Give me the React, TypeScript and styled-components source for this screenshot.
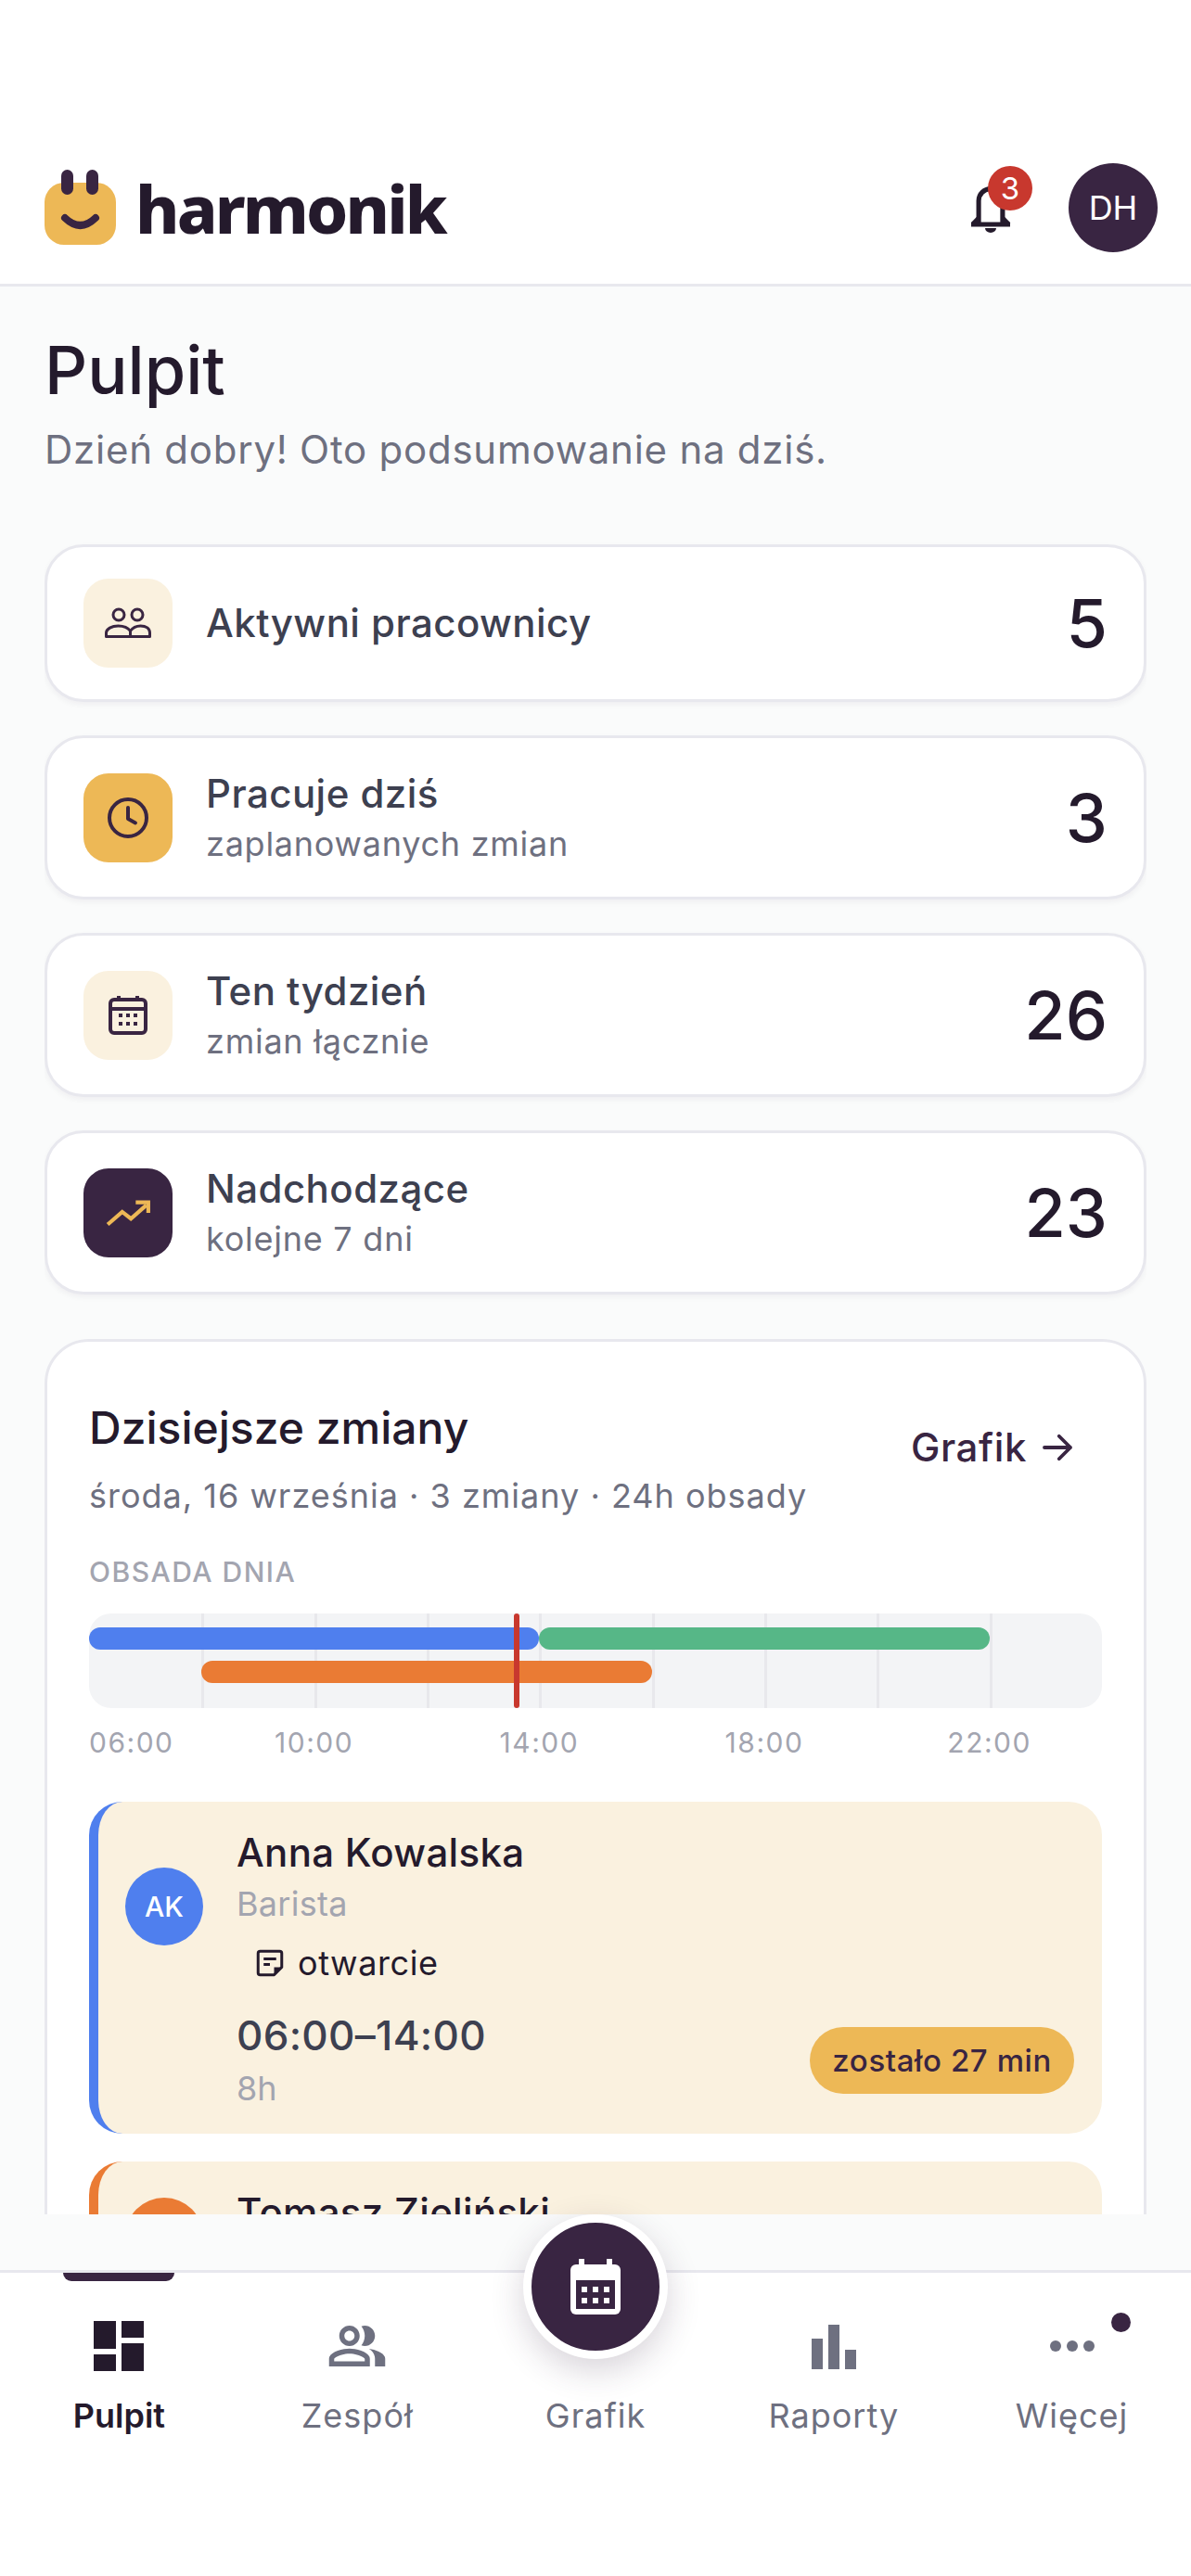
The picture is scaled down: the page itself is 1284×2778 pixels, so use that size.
import * as React from 'react';
import styled, { createGlobalStyle } from 'styled-components';

const dark = '#392542';
const ink = '#241a2c';
const amber = '#edb856';
const cream = '#faf1df';
const muted = '#6e7080';
const faint = '#a3a5b0';
const line = '#e8e8ee';

const GlobalStyle = createGlobalStyle`
	html, body {
		margin: 0;
		padding: 0;
		background: #fff;
		font-family: Inter, "Noto Sans", sans-serif;
	}
	* { box-sizing: border-box; }
`;

const Screen = styled.div`
	width: 1284px;
	height: 2778px;
	display: flex;
	flex-direction: column;
	background: #fff;
	padding-top: 141px;
	overflow: hidden;
	position: relative;
`;

const Header = styled.header`
	height: 168px;
	flex: none;
	display: flex;
	align-items: center;
	justify-content: space-between;
	padding: 0 36px 0 48px;
	border-bottom: 3px solid ${line};
`;

const Brand = styled.div`
	display: flex;
	align-items: center;
	gap: 20px;
`;

const BrandName = styled.span`
	font-family: "Noto Sans", Inter, sans-serif;
	font-weight: 800;
	font-size: 72px;
	letter-spacing: -2.8px;
	color: ${ink};
	line-height: 1;
`;

const HeaderActions = styled.div`
	display: flex;
	align-items: center;
	gap: 48px;
`;

const BellWrap = styled.div`
	position: relative;
	width: 72px;
	height: 72px;
	color: ${ink};
`;

const BellBadge = styled.span`
	position: absolute;
	top: -9px;
	right: -9px;
	width: 48px;
	height: 48px;
	border-radius: 50%;
	background: #c8382e;
	color: #fff;
	font-size: 33px;
	display: flex;
	align-items: center;
	justify-content: center;
`;

const UserAvatar = styled.div`
	width: 96px;
	height: 96px;
	border-radius: 50%;
	background: ${dark};
	color: #fff;
	font-size: 36px;
	font-weight: 400;
	display: flex;
	align-items: center;
	justify-content: center;
`;

const Content = styled.main`
	height: 2139px;
	flex: none;
	background: #fafbfb;
	padding: 48px 48px 60px;
`;

const Clip = styled.div`
	height: 2031px;
	overflow: hidden;
`;

const PageTitle = styled.h1`
	margin: 0;
	font-size: 72px;
	line-height: 84px;
	font-weight: 500;
	color: ${ink};
`;

const PageSubtitle = styled.p`
	margin: 17px 0 0;
	font-size: 42px;
	line-height: 54px;
	letter-spacing: 0.75px;
	color: ${muted};
`;

const StatList = styled.div`
	margin-top: 75px;
	display: flex;
	flex-direction: column;
	gap: 36px;
`;

const StatCard = styled.div<{ $tall: boolean }>`
	height: ${p => (p.$tall ? 177 : 170)}px;
	display: flex;
	align-items: center;
	gap: 36px;
	padding: 0 39px;
	background: #fff;
	border: 3px solid ${line};
	border-radius: 42px;
	box-shadow: 0 3px 6px rgba(30, 20, 50, 0.05);
`;

const StatIcon = styled.div<{ $bg: string; $fg: string }>`
	width: 96px;
	height: 96px;
	flex: none;
	border-radius: 27px;
	background: ${p => p.$bg};
	color: ${p => p.$fg};
	display: flex;
	align-items: center;
	justify-content: center;
`;

const StatText = styled.div`
	flex: 1;
	display: flex;
	flex-direction: column;
	gap: 3px;
`;

const StatLabel = styled.div`
	font-size: 42px;
	line-height: 54px;
	font-weight: 500;
	letter-spacing: 0.45px;
	color: #3d4050;
`;

const StatHint = styled.div`
	font-size: 36px;
	line-height: 48px;
	letter-spacing: 0.75px;
	color: ${muted};
`;

const StatValue = styled.div`
	font-size: 72px;
	line-height: 84px;
	font-weight: 500;
	color: ${ink};
`;

const ShiftsCard = styled.section`
	margin-top: 48px;
	background: #fff;
	border: 3px solid ${line};
	border-radius: 48px;
	padding: 63px 45px 60px;
`;

const ShiftsHead = styled.div`
	display: flex;
	align-items: flex-start;
	justify-content: space-between;
`;

const ShiftsTitle = styled.h2`
	margin: 0;
	font-size: 48px;
	line-height: 60px;
	font-weight: 500;
	color: ${ink};
`;

const ShiftsMeta = styled.div`
	margin-top: 19px;
	font-size: 36px;
	line-height: 48px;
	letter-spacing: 1px;
	color: ${muted};
`;

const GrafikLink = styled.div`
	display: flex;
	align-items: center;
	gap: 12px;
	margin: 24px 27px 0 0;
	font-size: 42px;
	line-height: 54px;
	font-weight: 500;
	letter-spacing: 0.6px;
	color: ${dark};
`;

const ChartLabel = styled.div`
	margin-top: 40px;
	font-size: 30px;
	line-height: 36px;
	font-weight: 500;
	letter-spacing: 1.5px;
	color: ${faint};
`;

const Track = styled.div`
	position: relative;
	margin-top: 27px;
	height: 102px;
	border-radius: 24px;
	background: #f3f4f6;
`;

const GridLine = styled.span`
	position: absolute;
	top: 0;
	bottom: 0;
	width: 3px;
	background: #e8e8ec;
`;

const Bar = styled.span<{ $color: string; $row: number }>`
	position: absolute;
	top: ${p => 15 + p.$row * 36}px;
	height: 24px;
	border-radius: 12px;
	background: ${p => p.$color};
`;

const NowLine = styled.span`
	position: absolute;
	top: 0;
	bottom: 0;
	width: 6px;
	border-radius: 3px;
	background: #c8382e;
`;

const Ticks = styled.div`
	position: relative;
	height: 42px;
	margin-top: 16px;
`;

const Tick = styled.span<{ $first: boolean }>`
	position: absolute;
	top: 0;
	font-size: 30px;
	line-height: 42px;
	letter-spacing: 1.5px;
	color: ${faint};
	transform: ${p => (p.$first ? 'none' : 'translateX(-50%)')};
`;

const ShiftList = styled.div`
	margin-top: 43px;
	display: flex;
	flex-direction: column;
	gap: 30px;
`;

const Shift = styled.article<{ $accent: string }>`
	background: ${cream};
	border-left: 10px solid ${p => p.$accent};
	border-radius: 36px;
	padding: 28px 30px 25px 29px;
`;

const ShiftTop = styled.div`
	display: flex;
	align-items: center;
	gap: 36px;
`;

const ShiftAvatar = styled.div<{ $color: string }>`
	width: 84px;
	height: 84px;
	flex: none;
	border-radius: 50%;
	background: ${p => p.$color};
	color: #fff;
	font-size: 30px;
	font-weight: 500;
	display: flex;
	align-items: center;
	justify-content: center;
`;

const ShiftName = styled.div`
	font-size: 42px;
	line-height: 54px;
	font-weight: 500;
	letter-spacing: 0.3px;
	color: ${ink};
`;

const ShiftRole = styled.div`
	margin-top: 4px;
	font-size: 36px;
	line-height: 48px;
	letter-spacing: 0.3px;
	color: ${faint};
`;

const ShiftNote = styled.div`
	display: flex;
	align-items: center;
	gap: 12px;
	margin-top: 16px;
	padding-left: 18px;
	font-size: 36px;
	line-height: 48px;
	letter-spacing: 0.6px;
	color: ${ink};
`;

const ShiftBottom = styled.div`
	display: flex;
	align-items: center;
	justify-content: space-between;
	margin: 27px 0 0 120px;
`;

const ShiftTime = styled.div`
	font-size: 44px;
	line-height: 54px;
	font-weight: 500;
	letter-spacing: 0.3px;
	color: #3d4050;
`;

const ShiftHours = styled.div`
	margin-top: 6px;
	font-size: 36px;
	line-height: 48px;
	color: ${faint};
`;

const TimeLeft = styled.div`
	height: 72px;
	padding: 0 24px;
	border-radius: 36px;
	background: ${amber};
	color: ${dark};
	font-size: 33px;
	font-weight: 500;
	letter-spacing: 0.6px;
	display: flex;
	align-items: center;
`;

const Nav = styled.nav`
	flex: 1;
	display: grid;
	grid-template-columns: repeat(5, 1fr);
	border-top: 3px solid ${line};
	background: #fff;
`;

const Tab = styled.div<{ $active?: boolean }>`
	position: relative;
	display: flex;
	flex-direction: column;
	align-items: center;
	padding-top: 43px;
	color: ${p => (p.$active ? ink : muted)};
	font-size: 36px;
	line-height: 48px;
	font-weight: ${p => (p.$active ? 600 : 400)};
	letter-spacing: ${p => (p.$active ? 0 : 1)}px;
`;

const TabIcon = styled.div`
	height: 72px;
	width: 72px;
	margin-bottom: 15px;
	display: flex;
	align-items: center;
	justify-content: center;
`;

const TabMarker = styled.span`
	position: absolute;
	top: 0;
	width: 120px;
	height: 9px;
	border-radius: 0 0 12px 12px;
	background: ${dark};
`;

const NavDot = styled.span`
	position: absolute;
	top: 43px;
	right: 65px;
	width: 21px;
	height: 21px;
	border-radius: 50%;
	background: ${dark};
`;

const Fab = styled.div`
	position: absolute;
	left: 564px;
	top: 2388px;
	width: 156px;
	height: 156px;
	border-radius: 50%;
	border: 9px solid #fff;
	background: ${dark};
	box-shadow: 0 12px 36px rgba(57, 37, 66, 0.2);
	display: flex;
	align-items: center;
	justify-content: center;
`;

function LogoMark() {
	return (
		<svg width="78" height="81" viewBox="0 0 78 81">
			<rect x="0" y="14" width="77" height="67" rx="21" fill={amber} />
			<rect x="18" y="0" width="13" height="27" rx="6.5" fill={dark} />
			<rect x="45" y="0" width="13" height="27" rx="6.5" fill={dark} />
			<path d="M22 52Q38.500 68 55 52" fill="none" stroke={dark} strokeWidth="8" strokeLinecap="round" />
		</svg>
	);
}

function BellIcon() {
	return (
		<svg width="72" height="72" viewBox="0 0 24 24" fill="none" stroke="currentColor" strokeWidth="1.700">
			<path d="M7.700 17.500V9.500a4.300 4.300 0 0 1 8.600 0v8" />
			<path d="M5 18h14M7.700 15.800L5.500 18M16.300 15.800L18.500 18" />
			<path d="M10 19.300h4a2 1.700 0 0 1-4 0z" fill="currentColor" stroke="none" />
		</svg>
	);
}

function PeopleIcon() {
	return (
		<svg width="54" height="36" viewBox="0 0 54 36" fill="none" stroke="currentColor" strokeWidth="3" strokeLinejoin="round">
			<circle cx="17" cy="9" r="6" />
			<circle cx="37" cy="9" r="6" />
			<path d="M3.500 32.500v-4c0-4.500 6-7.500 13-7.500 6 0 10.500 2 13 5.500 2.500-3.500 7-5.500 11-5.500 6 0 10 3 10 7.500v4z" />
			<path d="M29.500 26v6.500" />
		</svg>
	);
}

function ClockIcon() {
	return (
		<svg width="48" height="48" viewBox="0 0 24 24" fill="none" stroke="currentColor" strokeWidth="2" strokeLinecap="round" strokeLinejoin="round">
			<circle cx="12" cy="12" r="10" />
			<path d="M12 6.500V12.500l4 2.200" />
		</svg>
	);
}

function CalendarIcon() {
	return (
		<svg width="48" height="48" viewBox="0 0 24 24" fill="none" stroke="currentColor" strokeWidth="2">
			<path d="M7 1.500v3M17 1.500v3" />
			<rect x="2.500" y="3.500" width="19" height="18" rx="2" />
			<path d="M3 8.500h18" />
			{[7, 11, 15].map(x => [11, 15.5].map(y => (
				<rect key={`${x}-${y}`} x={x} y={y} width="2" height="2" fill="currentColor" stroke="none" />
			)))}
		</svg>
	);
}

function FabCalendarIcon() {
	return (
		<svg width="54" height="60" viewBox="0 0 54 60">
			<path d="M9 0h6v8H9zM39 0h6v8h-6z" fill="#fff" />
			<rect x="0" y="6" width="54" height="54" rx="6" fill="#fff" />
			<rect x="6" y="23" width="42" height="31" fill={dark} />
			{[12, 24, 36].map(x => [30, 42].map(y => (
				<rect key={`${x}-${y}`} x={x} y={y} width="6" height="6" fill="#fff" />
			)))}
		</svg>
	);
}

function TrendIcon() {
	return (
		<svg width="50" height="50" viewBox="0 0 24 24" fill="none" stroke="currentColor" strokeWidth="2">
			<path d="M1.500 18l7.500-6.500 4.500 3.500 8-7" />
			<path d="M16 6.500h6.500v5.500" />
		</svg>
	);
}

function ArrowIcon() {
	return (
		<svg width="42" height="42" viewBox="0 0 24 24" fill="none" stroke="currentColor" strokeWidth="2.200" strokeLinecap="round" strokeLinejoin="round">
			<path d="M4 12h16M13 5l7 7-7 7" />
		</svg>
	);
}

function NoteIcon() {
	return (
		<svg width="36" height="36" viewBox="0 0 24 24" fill="none" stroke="currentColor" strokeWidth="2" strokeLinejoin="round">
			<path d="M5 3.500h14a1.500 1.500 0 0 1 1.500 1.500v10l-5.500 5.500H5A1.500 1.500 0 0 1 3.500 19V5A1.500 1.500 0 0 1 5 3.500z" />
			<path d="M20.500 15h-5.500v5.500z" fill="currentColor" stroke="none" />
			<path d="M7.500 9h9M7.500 13h4.500" />
		</svg>
	);
}

function DashboardIcon() {
	return (
		<svg width="72" height="72" viewBox="0 0 24 24" fill="currentColor">
			<path d="M3 3h8v10H3zM13 3h8v6h-8zM13 11h8v10h-8zM3 15h8v6H3z" />
		</svg>
	);
}

function TeamIcon() {
	return (
		<svg width="66" height="66" viewBox="0 0 24 24" fill="currentColor">
			<path d="M16.670 13.130C18.040 14.060 19 15.320 19 17v3h4v-3c0-2.180-3.570-3.470-6.330-3.870zM15 12c2.210 0 4-1.790 4-4s-1.790-4-4-4c-.47 0-.91.1-1.330.24C14.500 5.270 15 6.580 15 8s-.5 2.730-1.330 3.760c.42.14.86.24 1.330.24zM9 12c2.210 0 4-1.790 4-4s-1.790-4-4-4-4 1.790-4 4 1.790 4 4 4zm0-6c1.100 0 2 .9 2 2s-.9 2-2 2-2-.9-2-2 .9-2 2-2zM9 13c-2.670 0-8 1.340-8 4v3h16v-3c0-2.660-5.330-4-8-4zm6 5H3v-.99C3.200 16.290 6.300 15 9 15s5.800 1.290 6 2z" />
		</svg>
	);
}

function ChartIcon() {
	return (
		<svg width="72" height="72" viewBox="0 0 24 24" fill="currentColor">
			<path d="M4 9.330h4V20.330H4zM10 4.330h4V20.330h-4zM16 13.330h4v7h-4z" />
		</svg>
	);
}

function DotsIcon() {
	return (
		<svg width="72" height="72" viewBox="0 0 24 24" fill="currentColor">
			<circle cx="6" cy="12" r="2" />
			<circle cx="12" cy="12" r="2" />
			<circle cx="18" cy="12" r="2" />
		</svg>
	);
}

const stats = [
	{ label: 'Aktywni pracownicy', value: '5', bg: cream, fg: dark, icon: <PeopleIcon /> },
	{ label: 'Pracuje dziś', hint: 'zaplanowanych zmian', value: '3', bg: amber, fg: dark, icon: <ClockIcon /> },
	{ label: 'Ten tydzień', hint: 'zmian łącznie', value: '26', bg: cream, fg: dark, icon: <CalendarIcon /> },
	{ label: 'Nadchodzące', hint: 'kolejne 7 dni', value: '23', bg: dark, fg: amber, icon: <TrendIcon /> },
];

const hourWidth = 1092 / 18;
const hourX = (hour: number) => (hour - 6) * hourWidth;

export default function App() {
	return (
		<Screen>
			<GlobalStyle />
			<Header>
				<Brand>
					<LogoMark />
					<BrandName>harmonik</BrandName>
				</Brand>
				<HeaderActions>
					<BellWrap>
						<BellIcon />
						<BellBadge>3</BellBadge>
					</BellWrap>
					<UserAvatar>DH</UserAvatar>
				</HeaderActions>
			</Header>
			<Content>
				<Clip>
					<PageTitle>Pulpit</PageTitle>
					<PageSubtitle>Dzień dobry! Oto podsumowanie na dziś.</PageSubtitle>
					<StatList>
						{stats.map(s => (
							<StatCard key={s.label} $tall={!!s.hint}>
								<StatIcon $bg={s.bg} $fg={s.fg}>{s.icon}</StatIcon>
								<StatText>
									<StatLabel>{s.label}</StatLabel>
									{s.hint && <StatHint>{s.hint}</StatHint>}
								</StatText>
								<StatValue>{s.value}</StatValue>
							</StatCard>
						))}
					</StatList>
					<ShiftsCard>
						<ShiftsHead>
							<div>
								<ShiftsTitle>Dzisiejsze zmiany</ShiftsTitle>
								<ShiftsMeta>środa, 16 września · 3 zmiany · 24h obsady</ShiftsMeta>
							</div>
							<GrafikLink>Grafik <ArrowIcon /></GrafikLink>
						</ShiftsHead>
						<ChartLabel>OBSADA DNIA</ChartLabel>
						<Track>
							{[8, 10, 12, 14, 16, 18, 20, 22].map(h => (
								<GridLine key={h} style={{ left: hourX(h) }} />
							))}
							<Bar $color="#4f7fee" $row={0} style={{ left: 0, width: hourX(14) }} />
							<Bar $color="#56b787" $row={0} style={{ left: hourX(14), width: hourX(22) - hourX(14) }} />
							<Bar $color="#ea7b34" $row={1} style={{ left: hourX(8), width: hourX(16) - hourX(8) }} />
							<NowLine style={{ left: hourX(13.55) }} />
						</Track>
						<Ticks>
							{[6, 10, 14, 18, 22].map(h => (
								<Tick key={h} $first={h === 6} style={{ left: hourX(h) }}>
									{String(h).padStart(2, '0')}:00
								</Tick>
							))}
						</Ticks>
						<ShiftList>
							<Shift $accent="#4f7fee">
								<ShiftTop>
									<ShiftAvatar $color="#4f7fee">AK</ShiftAvatar>
									<div>
										<ShiftName>Anna Kowalska</ShiftName>
										<ShiftRole>Barista</ShiftRole>
										<ShiftNote><NoteIcon />otwarcie</ShiftNote>
									</div>
								</ShiftTop>
								<ShiftBottom>
									<div>
										<ShiftTime>06:00–14:00</ShiftTime>
										<ShiftHours>8h</ShiftHours>
									</div>
									<TimeLeft>zostało 27 min</TimeLeft>
								</ShiftBottom>
							</Shift>
							<Shift $accent="#ea7b34">
								<ShiftTop>
									<ShiftAvatar $color="#ea7b34">TZ</ShiftAvatar>
									<div>
										<ShiftName>Tomasz Zieliński</ShiftName>
										<ShiftRole>Kelner</ShiftRole>
									</div>
								</ShiftTop>
							</Shift>
						</ShiftList>
					</ShiftsCard>
				</Clip>
			</Content>
			<Nav>
				<Tab $active>
					<TabMarker />
					<TabIcon><DashboardIcon /></TabIcon>
					Pulpit
				</Tab>
				<Tab><TabIcon><TeamIcon /></TabIcon>Zespół</Tab>
				<Tab><TabIcon />Grafik</Tab>
				<Tab><TabIcon><ChartIcon /></TabIcon>Raporty</Tab>
				<Tab>
					<NavDot />
					<TabIcon><DotsIcon /></TabIcon>
					Więcej
				</Tab>
			</Nav>
			<Fab><FabCalendarIcon /></Fab>
		</Screen>
	);
}
